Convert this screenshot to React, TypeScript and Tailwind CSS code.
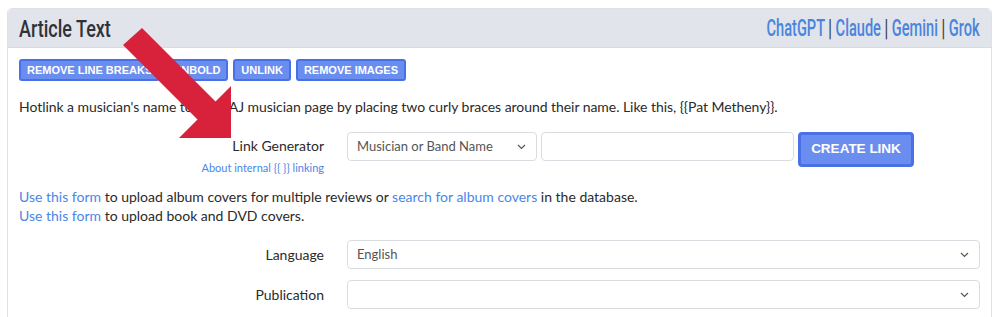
import React from "react";

const Chevron = () => (
  <svg width="9" height="6" viewBox="0 0 9 6" className="absolute right-[10px] top-1/2 -translate-y-1/2">
    <path d="M1 1l3.5 3.5L8 1" fill="none" stroke="#555" strokeWidth="1.2" />
  </svg>
);

const Select = ({ text, className }: { text: string; className: string }) => (
  <div className={"relative h-[29px] border border-[#d9dce0] rounded-[4px] bg-white flex items-center pl-[9px] text-[13px] text-[#555] " + className}>
    {text}
    <Chevron />
  </div>
);

const Btn = ({ children }: { children: React.ReactNode }) => (
  <div className="h-[22px] px-[6px] flex items-center bg-[#6a8ef0] border-2 border-[#4a70e8] rounded-[3px] text-white text-[11px] font-bold leading-none">
    {children}
  </div>
);

export default function App() {
  const body = { fontFamily: "Lato, 'Noto Sans', sans-serif" };
  const cond = { fontFamily: "Roboto, sans-serif" };
  const btnFont = { fontFamily: "'Liberation Sans', Arial, sans-serif" };
  return (
    <div className="relative bg-white w-[1000px] h-[317px] overflow-hidden pt-2 pl-[7px] pr-2" style={body}>
      <div className="border border-[#dee1e6] rounded-[5px] h-[400px]">
        <div className="h-[39px] bg-[#e1e4eb] rounded-t-[5px] flex items-center justify-between pl-[11px] pr-[11px] border-b border-[#d7dbe2]">
          <div className="text-[24px] font-medium text-[#2f3338] leading-none whitespace-nowrap origin-left scale-x-[0.75] pt-[1px]" style={cond}>Article Text</div>
          <div className="text-[23px] font-medium text-[#3a3d42] leading-none whitespace-nowrap origin-right scale-x-[0.635] pt-[1px]" style={cond}>
            <span className="text-[#4a84dc]">ChatGPT</span> | <span className="text-[#4a84dc]">Claude</span> | <span className="text-[#4a84dc]">Gemini</span> | <span className="text-[#4a84dc]">Grok</span>
          </div>
        </div>
        <div className="px-[11px] pt-[11px] text-[14px] text-[#2a2a2a]">
          <div className="flex gap-[5px]" style={btnFont}>
            <Btn>REMOVE LINE BREAKS</Btn>
            <Btn>UNBOLD</Btn>
            <Btn>UNLINK</Btn>
            <Btn>REMOVE IMAGES</Btn>
          </div>
          <p className="mt-[16px] leading-[20px] tracking-[-0.05px]">
            Hotlink a musician's name to the AAJ musician page by placing two curly braces around their name. Like this, {"{{Pat Metheny}}"}.
          </p>
          <div className="mt-[15px] flex">
            <div className="w-[305px] text-right shrink-0">
              <div className="leading-[20px] pt-[4px]">Link Generator</div>
              <div className="text-[11px] text-[#4a86e8] leading-[16px] mt-[4px]">About internal {"{{ }}"} linking</div>
            </div>
            <div className="ml-[23px] flex gap-[4px] items-start">
              <Select text="Musician or Band Name" className="w-[190px]" />
              <div className="w-[253px] h-[29px] border border-[#d9dce0] rounded-[4px] bg-white" />
              <div className="w-[116px] h-[35px] bg-[#6a8ef0] border-[3px] border-[#4a70e8] rounded-[4px] flex items-center justify-center text-white text-[13.5px] font-bold" style={btnFont}>
                CREATE LINK
              </div>
            </div>
          </div>
          <p className="mt-[11px] leading-[19px]">
            <span className="text-[#4a86e8]">Use this form</span> to upload album covers for multiple reviews or <span className="text-[#4a86e8]">search for album covers</span> in the database.
            <br />
            <span className="text-[#4a86e8]">Use this form</span> to upload book and DVD covers.
          </p>
          <div className="mt-[15px] flex items-center">
            <div className="w-[305px] text-right shrink-0">Language</div>
            <Select text="English" className="ml-[23px] flex-1" />
          </div>
          <div className="mt-[11px] flex items-center">
            <div className="w-[305px] text-right shrink-0">Publication</div>
            <Select text="" className="ml-[23px] flex-1" />
          </div>
        </div>
      </div>
      <svg className="absolute left-0 top-0" width="1000" height="317" viewBox="0 0 1000 317">
        <polygon points="142,28 215.5,101.5 231,86 231,138 179,138 197.5,119.5 123,45" fill="#d8213b" />
      </svg>
    </div>
  );
}
